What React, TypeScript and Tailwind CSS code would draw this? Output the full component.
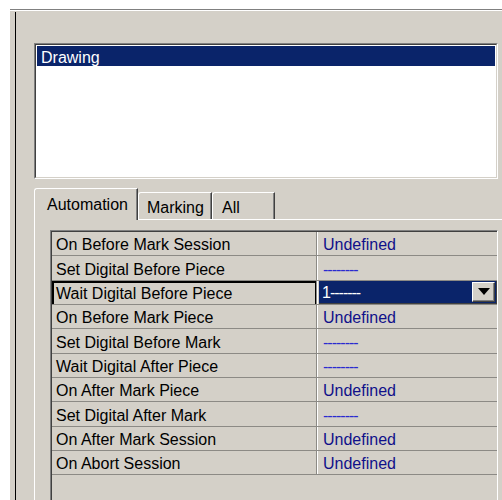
import React from "react";

type Row = { name: string; value: string; dashes?: boolean };

const rows: Row[] = [
  { name: "On Before Mark Session", value: "Undefined" },
  { name: "Set Digital Before Piece", value: "--------", dashes: true },
  { name: "Wait Digital Before Piece", value: "1-------", dashes: true },
  { name: "On Before Mark Piece", value: "Undefined" },
  { name: "Set Digital Before Mark", value: "--------", dashes: true },
  { name: "Wait Digital After Piece", value: "--------", dashes: true },
  { name: "On After Mark Piece", value: "Undefined" },
  { name: "Set Digital After Mark", value: "--------", dashes: true },
  { name: "On After Mark Session", value: "Undefined" },
  { name: "On Abort Session", value: "Undefined" },
];

const SELECTED = 2;

function DropArrow() {
  return (
    <svg width="12" height="7" viewBox="0 0 12 7">
      <polygon points="0,0 12,0 6,7" fill="#000" />
    </svg>
  );
}

function PropertyRow({ row, index }: { row: Row; index: number }) {
  const selected = index === SELECTED;
  return (
    <div className="flex h-[24.35px] border-b border-[#8c8a85]">
      <div
        className={
          "w-[265px] shrink-0 flex items-center pl-[4px] pt-[3px] border-r border-[#8c8a85] text-black " +
          (selected ? "shadow-[inset_2px_2px_0_#000,inset_-1px_0_0_#000]" : "")
        }
      >
        {row.name}
      </div>
      {selected ? (
        <div className="flex-1 flex border-l border-white pl-[1px]">
          <div className="flex-1 flex items-center bg-[#0a246a] border-r border-b border-[#404040] pr-[1px]">
            <span className="flex-1 pl-[3px] pt-[3px] text-white tracking-[-1px]">{row.value}</span>
            <div className="w-[23px] h-[20px] flex items-center justify-center bg-[#d4d0c8] border-t border-l border-white border-r border-b border-r-[#404040] border-b-[#404040] shadow-[inset_-1px_-1px_0_#808080]">
              <DropArrow />
            </div>
          </div>
        </div>
      ) : (
        <div
          className={
            "flex-1 flex items-center border-l border-white pl-[5px] pt-[3px] " +
            (row.dashes ? "tracking-[-1px] text-[#2a2ad0]" : "text-[#10108a]")
          }
        >
          {row.value}
        </div>
      )}
    </div>
  );
}

export default function App() {
  return (
    <div className="w-[502px] h-[500px] overflow-hidden bg-white font-['Liberation_Sans',Arial,sans-serif] text-[16px] leading-none">
      <div className="h-full pt-[9px] pl-[10px]">
        <div className="h-full bg-[#d4d0c8] border-t border-[#808080] shadow-[inset_0_1px_0_#ffffff] pl-[5px] pt-[2px]">
          <div className="h-full border-l border-black pl-[18px] pt-[31px]">
            {/* object list */}
            <div className="w-[464px] h-[136px] border border-t-[#808080] border-l-[#808080] border-r-white border-b-white">
              <div className="h-full border border-t-[#404040] border-l-[#404040] border-r-[#d4d0c8] border-b-[#d4d0c8] bg-white p-[1px]">
                <div className="h-[20px] bg-[#0a246a] text-white flex items-center pl-[4px] pt-[3px]">
                  Drawing
                </div>
              </div>
            </div>

            {/* tab strip */}
            <div className="mt-[9px] h-[31px] flex items-end relative z-10">
              <div className="w-[104px] h-[32px] -mb-[1px] bg-[#d4d0c8] border-t border-l border-white border-r border-r-[#404040] rounded-tl-[3px] shadow-[inset_-1px_0_0_#808080] pl-[12px] pt-[8px] text-black">
                Automation
              </div>
              <div className="w-[74px] h-[27px] bg-[#d4d0c8] border-t border-l border-white border-r border-r-[#404040] rounded-tl-[3px] shadow-[inset_-1px_0_0_#808080] pl-[8px] pt-[7px] text-black">
                Marking
              </div>
              <div className="w-[63px] h-[27px] bg-[#d4d0c8] border-t border-l border-white border-r border-r-[#404040] rounded-tl-[3px] shadow-[inset_-1px_0_0_#808080] pl-[9px] pt-[7px] text-black">
                All
              </div>
            </div>

            {/* tab page */}
            <div className="h-[320px] bg-[#d4d0c8] border-t border-l border-white pl-[15px] pt-[10px]">
              <div className="w-[448px] h-full border-t border-l border-[#808080] border-r border-r-white">
                <div className="h-full border-t border-l border-[#404040] bg-[#d4d0c8]">
                  {rows.map((r, i) => (
                    <PropertyRow key={r.name} row={r} index={i} />
                  ))}
                </div>
              </div>
            </div>
          </div>
        </div>
      </div>
    </div>
  );
}
